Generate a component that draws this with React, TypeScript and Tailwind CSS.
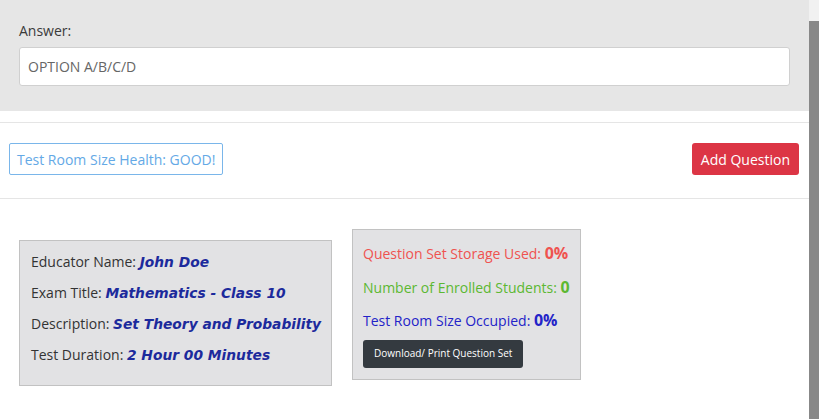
import React from 'react';

const stats = [
  { label: 'Question Set Storage Used:', value: '0%', color: 'text-[#ef5350]' },
  { label: 'Number of Enrolled Students:', value: '0', color: 'text-[#5cb832]' },
  { label: 'Test Room Size Occupied:', value: '0%', color: 'text-[#2323c8]' },
];

const details = [
  { label: 'Educator Name:', value: 'John Doe' },
  { label: 'Exam Title:', value: 'Mathematics - Class 10' },
  { label: 'Description:', value: 'Set Theory and Probability' },
  { label: 'Test Duration:', value: '2 Hour 00 Minutes' },
];

const App = () => (
  <div className="flex h-[419px] w-[819px] overflow-hidden bg-white font-['Open_Sans',sans-serif]">
    <div className="w-[809px]">
      {/* answer panel */}
      <div className="h-[111px] bg-[#e6e6e6] px-[19px] pt-[21px]">
        <label className="block text-[14px] leading-[20px] text-[#3a3a3a]">Answer:</label>
        <div className="mt-[6px] flex h-[39px] items-center rounded-[3px] border border-[#d0d0d0] bg-white px-[8px] text-[14px] text-[#666]">
          OPTION A/B/C/D
        </div>
      </div>

      <div className="mt-[11px] border-t border-[#e5e5e5]">
        <div className="flex items-start justify-between pb-[23px] pl-[9px] pr-[10px] pt-[20px]">
          <div className="flex h-[32px] items-center rounded-[2px] border border-[#7ab6ea] px-[7px] text-[14px] text-[#64a9e6]">
            Test Room Size Health: GOOD!
          </div>
          <button className="h-[32px] rounded-[3px] bg-[#dc3545] px-[9px] text-[14px] text-white">
            Add Question
          </button>
        </div>
      </div>

      <div className="flex items-start gap-[20px] border-t border-[#e5e5e5] px-[19px] pt-[30px]">
        <div className="mt-[11px] w-[313px] border border-[#c2c2c2] bg-[#e2e2e4] px-[11px] pb-[15px] pt-[5px]">
          {details.map((d) => (
            <p key={d.label} className="h-[31px] whitespace-nowrap py-[5px] text-[14px] leading-[21px] text-[#333]">
              {d.label}{' '}
              <span className="font-['DejaVu_Sans',sans-serif] text-[13.8px] font-bold italic leading-[21px] text-[#1c2a9c]">
                {d.value}
              </span>
            </p>
          ))}
        </div>
        <div className="w-[229px] border border-[#c2c2c2] bg-[#e2e2e4] px-[10px] pb-[11px] pt-[7px]">
          {stats.map((s) => (
            <p key={s.label} className={`h-[33.5px] py-[6px] text-[14px] leading-[21.5px] ${s.color}`}>
              {s.label} <span className="text-[16px] font-bold leading-[21.5px]">{s.value}</span>
            </p>
          ))}
          <button className="mt-[2px] h-[28px] rounded-[3px] bg-[#343a40] px-[11px] text-[10px] text-white">
            Download/ Print Question Set
          </button>
        </div>
      </div>
    </div>

    {/* scrollbar */}
    <div className="flex w-[10px] flex-col bg-[#f1f1f1]">
      <div className="mt-[21px] flex-1 bg-[#888]" />
    </div>
  </div>
);

export default App;
